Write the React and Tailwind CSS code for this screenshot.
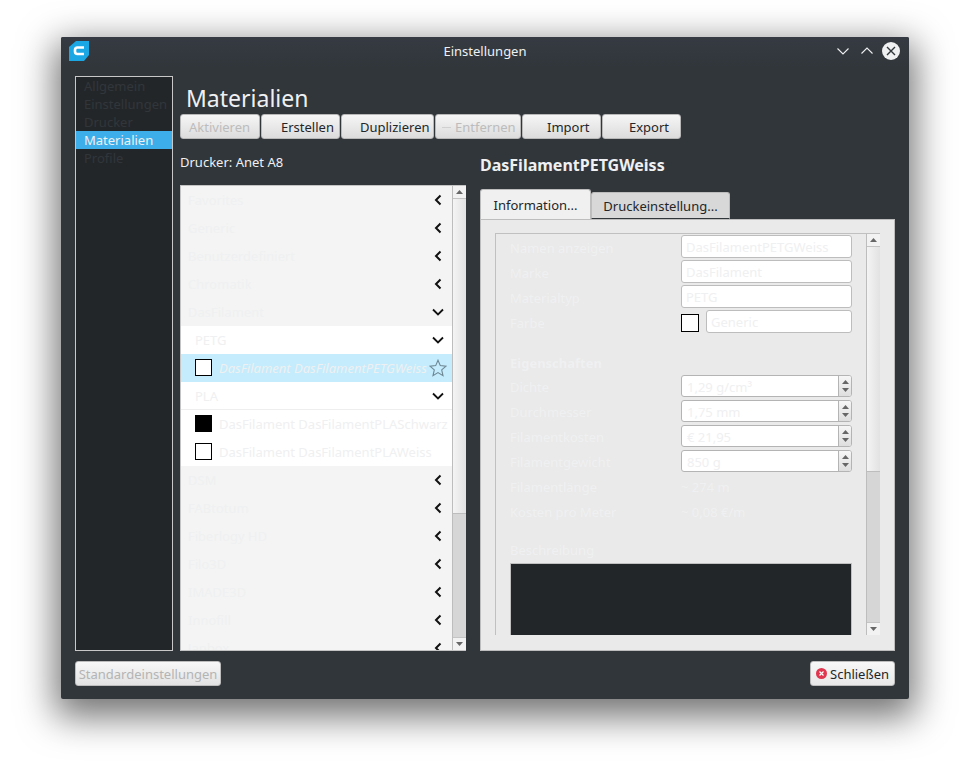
const font = { fontFamily: '"Noto Sans", sans-serif' };

const ChevronLeft = () => (
  <svg width="10" height="12" viewBox="0 0 10 12" className="shrink-0">
    <path d="M7.5 1.5 L3 6 L7.5 10.5" fill="none" stroke="#111" strokeWidth="2" />
  </svg>
);

const ChevronDown = () => (
  <svg width="12" height="10" viewBox="0 0 12 10" className="shrink-0">
    <path d="M1 2.5 L6 7.5 L11 2.5" fill="none" stroke="#111" strokeWidth="1.8" />
  </svg>
);

const Arrow = ({ up, color = "#666" }) => (
  <svg width="7" height="4" viewBox="0 0 7 4" className="block">
    <path d={up ? "M0 4 L3.5 0 L7 4 Z" : "M0 0 L3.5 4 L7 0 Z"} fill={color} />
  </svg>
);

const ToolButton = ({ label, w, pl, disabled, dash }) => (
  <div
    className={`relative flex h-[25px] items-center rounded-[3px] border border-[#b8b8b8] bg-gradient-to-b from-[#f6f6f6] to-[#dcdcdc] pt-[2px] text-[13px] ${disabled ? "text-[#bcbcbc]" : "text-[#232629]"} ${w} ${pl}`}
  >
    {dash && <span className="absolute left-[6px] top-[12px] h-px w-[9px] bg-[#d0d0d0]" />}
    {label}
  </div>
);

const Row = ({ label, open, sub }) => (
  <div className={`flex h-[28px] shrink-0 items-center justify-between pr-[8px] text-[13px] leading-[18px] text-[#eff0f1] ${sub ? "bg-white pl-[14px]" : "bg-[#f4f4f4] pl-[7px]"}`}>
    <span>{label}</span>
    <span className="flex w-[12px] justify-center">{open ? <ChevronDown /> : <ChevronLeft />}</span>
  </div>
);

const MaterialRow = ({ label, color }) => (
  <div className="flex h-[28px] shrink-0 items-center bg-white pl-[14px] text-[13px] leading-[18px] text-[#eff0f1]">
    <span className={`mb-[2px] mr-[7px] h-[17px] w-[17px] shrink-0 border border-black ${color}`} />
    <span className="whitespace-nowrap">{label}</span>
  </div>
);

const Field = ({ value, w = "w-[171px]" }) => (
  <div className={`flex h-[23px] items-center rounded-[3px] border border-[#bdbdbd] bg-white pl-[4px] pt-px text-[13px] leading-[18px] text-[#eff0f1] ${w}`}>
    {value}
  </div>
);

const Spin = ({ value }) => (
  <div className="flex h-[22px] w-[171px] items-center overflow-hidden rounded-[3px] border border-[#b4b4b4] bg-white text-[13px] leading-[18px] text-[#eff0f1]">
    <span className="mt-[2px] flex-1 pl-[5px]">{value}</span>
    <span className="flex h-full w-[13px] flex-col items-center justify-center gap-[4px] border-l border-[#b4b4b4] bg-gradient-to-b from-[#f6f6f6] to-[#dedede]">
      <Arrow up />
      <Arrow />
    </span>
  </div>
);

const FormRow = ({ label, children, cls = "h-[23px] mb-[2px]", labelCls = "mt-[2px]" }) => (
  <div className={`flex items-center text-[13px] leading-[18px] text-[#eff0f1] ${cls}`}>
    <span className={`w-[171px] ${labelCls}`}>{label}</span>
    {children}
  </div>
);

const Scrollbar = ({ thumb }) => (
  <div className="flex h-full w-[14px] shrink-0 flex-col border-l border-[#bdbdbd] bg-[#d6d6d6]">
    <div className="flex h-[13px] shrink-0 items-center justify-center border-b border-[#c4c4c4] bg-[#f2f2f2]">
      <Arrow up />
    </div>
    <div className={`shrink-0 border-b border-[#bdbdbd] bg-gradient-to-r from-[#f4f4f4] to-[#e2e2e2] ${thumb}`} />
    <div className="flex-1" />
    <div className="flex h-[13px] shrink-0 items-center justify-center border-t border-[#c4c4c4] bg-[#f2f2f2]">
      <Arrow />
    </div>
  </div>
);

const sideItems = ["Allgemein", "Einstellungen", "Drucker", "Materialien", "Profile"];
const topVendors = ["Favorites", "Generic", "Benutzerdefiniert", "Chromatik"];
const bottomVendors = ["DSM", "FABtotum", "Fiberlogy HD", "Filo3D", "IMADE3D", "Innofill", "Janbox"];

const App = () => {
  return (
    <div className="h-[761px] w-[970px] overflow-hidden bg-white pl-[61px] pt-[37px]" style={font}>
      <div className="flex h-[662px] w-[848px] flex-col rounded-[2px] bg-[#31363b] shadow-[0_12px_36px_6px_rgba(0,0,0,0.55)]">
        {/* titlebar */}
        <div className="relative flex h-[30px] shrink-0 items-center justify-center rounded-t-[2px] bg-gradient-to-b from-[#363b43] to-[#31363b] text-[13px] text-[#eff0f1]">
          <svg width="20" height="20" viewBox="0 0 20 20" className="absolute left-[8px] top-[4px]">
            <path d="M7 0 H20 V14 L15 20 H0 V6 Z" fill="#1ba6e4" />
            <path d="M15 6.5 H8.5 Q6 6.5 6 9 V10.5 Q6 13 8.5 13 H15" fill="none" stroke="#fff" strokeWidth="2.6" />
          </svg>
          <span>Einstellungen</span>
          <div className="absolute right-[9px] top-[5px] flex items-center">
            <svg width="14" height="10" viewBox="0 0 14 10" className="mr-[10px]">
              <path d="M1.5 2.5 L7 8 L12.5 2.5" fill="none" stroke="#eff0f1" strokeWidth="1.1" />
            </svg>
            <svg width="14" height="10" viewBox="0 0 14 10" className="mr-[8px]">
              <path d="M1.5 7.5 L7 2 L12.5 7.5" fill="none" stroke="#eff0f1" strokeWidth="1.1" />
            </svg>
            <svg width="18" height="18" viewBox="0 0 18 18">
              <circle cx="9" cy="9" r="9" fill="#eff0f1" />
              <path d="M5 5 L13 13 M13 5 L5 13" stroke="#31363b" strokeWidth="1.4" />
            </svg>
          </div>
        </div>

        {/* body */}
        <div className="flex h-[584px] shrink-0 gap-[7px] pl-[14px] pt-[9px]">
          <div className="h-[575px] w-[98px] shrink-0 border border-[#c8c8c8] bg-[#232629] text-[13px] text-[#31363b]">
            {sideItems.map((item) => (
              <div
                key={item}
                className={`flex h-[18px] items-center whitespace-nowrap pl-[8px] pt-[2px] ${item === "Materialien" ? "bg-[#3daee9] text-[#eff0f1]" : ""}`}
              >
                {item}
              </div>
            ))}
          </div>

          <div className="flex w-[715px] shrink-0 flex-col">
            <div className="flex h-[38px] shrink-0 items-end pl-[6px] pb-[1px] text-[23px] leading-[30px] text-[#eff0f1]">Materialien</div>
            <div className="flex h-[25px] shrink-0 gap-px">
              <ToolButton label="Aktivieren" w="w-[80px]" pl="pl-[8px]" disabled />
              <ToolButton label="Erstellen" w="w-[79px]" pl="pl-[19px]" />
              <ToolButton label="Duplizieren" w="w-[93px]" pl="pl-[18px]" />
              <ToolButton label="Entfernen" w="w-[86px]" pl="pl-[19px]" disabled dash />
              <ToolButton label="Import" w="w-[79px]" pl="pl-[24px]" />
              <ToolButton label="Export" w="w-[79px]" pl="pl-[26px]" />
            </div>

            <div className="flex h-[512px] shrink-0 gap-[14px]">
              {/* material list */}
              <div className="flex w-[286px] shrink-0 flex-col">
                <div className="flex h-[46px] shrink-0 items-start pt-[14px] text-[13px] leading-[18px] text-[#eff0f1]">Drucker: Anet A8</div>
                <div className="flex h-[466px] border border-r-0 border-[#c4c4c4] bg-[#f4f4f4]">
                  <div className="flex min-w-0 flex-1 flex-col overflow-hidden">
                    {topVendors.map((v) => (
                      <Row key={v} label={v} />
                    ))}
                    <Row label="DasFilament" open />
                    <Row label="PETG" open sub />
                    <div className="flex h-[28px] shrink-0 items-center bg-[#c4ecfc] pl-[14px] text-[13px] italic leading-[18px] text-[#eff0f1]">
                      <span className="mb-[2px] mr-[7px] h-[17px] w-[17px] shrink-0 border border-black bg-white" />
                      <span className="min-w-0 flex-1 overflow-hidden whitespace-nowrap">DasFilament DasFilamentPETGWeiss</span>
                      <svg width="18" height="18" viewBox="0 0 18 18" className="mr-[5px] shrink-0">
                        <path d="M9 1.2 L11.3 6.6 L17 7.1 L12.7 10.9 L14 16.6 L9 13.6 L4 16.6 L5.3 10.9 L1 7.1 L6.7 6.6 Z" fill="none" stroke="#6e8794" strokeWidth="1.1" />
                      </svg>
                    </div>
                    <div className="border-b border-[#eeeeee]">
                      <div className="flex h-[27px] items-center justify-between bg-white pl-[14px] pr-[8px] text-[13px] leading-[18px] text-[#eff0f1]">
                        <span>PLA</span>
                        <span className="flex w-[12px] justify-center"><ChevronDown /></span>
                      </div>
                    </div>
                    <MaterialRow label="DasFilament DasFilamentPLASchwarz" color="bg-black" />
                    <MaterialRow label="DasFilament DasFilamentPLAWeiss" color="bg-white" />
                    {bottomVendors.map((v) => (
                      <Row key={v} label={v} />
                    ))}
                  </div>
                  <Scrollbar thumb="h-[315px]" />
                </div>
              </div>

              {/* details */}
              <div className="flex w-[415px] shrink-0 flex-col">
                <div className="flex h-[51px] shrink-0 items-start pt-[15px] text-[16px] font-bold leading-[22px] text-[#eff0f1]">DasFilamentPETGWeiss</div>
                <div className="flex h-[29px] shrink-0 items-end">
                  <div className="z-10 flex h-[30px] w-[111px] items-center justify-center rounded-t-[3px] border border-b-0 border-[#bdbdbd] bg-[#f0f0f0] pt-[3px] text-[13px] text-[#232629]">Information...</div>
                  <div className="flex h-[27px] w-[139px] items-center justify-center rounded-t-[3px] border border-[#bdbdbd] border-b-[#31363b] bg-[#d8d8d8] pt-[2px] text-[13px] text-[#232629]">Druckeinstellung...</div>
                </div>
                <div className="h-[432px] border border-[#bdbdbd] bg-[#eaeaea] pl-[14px] pr-[14px] pt-[13px]">
                  <div className="flex h-[402px] overflow-hidden border-l border-t border-[#c0c0c0]">
                    <div className="w-[370px] shrink-0 overflow-hidden pl-[14px] pt-px">
                      <FormRow label="Namen anzeigen"><Field value="DasFilamentPETGWeiss" /></FormRow>
                      <FormRow label="Marke"><Field value="DasFilament" /></FormRow>
                      <FormRow label="Materialtyp"><Field value="PETG" /></FormRow>
                      <FormRow label="Farbe" cls="h-[23px]">
                        <span className="mr-[7px] mt-[2px] h-[18px] w-[18px] shrink-0 border border-black bg-white" />
                        <Field value="Generic" w="w-[146px]" />
                      </FormRow>
                      <div className="mt-[17px] flex h-[25px] items-center text-[13px] font-bold leading-[18px] text-[#eff0f1]">Eigenschaften</div>
                      <FormRow label="Dichte" cls="h-[22px] mb-[3px]" labelCls="mt-px"><Spin value="1,29 g/cm³" /></FormRow>
                      <FormRow label="Durchmesser" cls="h-[22px] mb-[3px]" labelCls="mt-px"><Spin value="1,75 mm" /></FormRow>
                      <FormRow label="Filamentkosten" cls="h-[22px] mb-[3px]" labelCls="mt-px"><Spin value="€ 21,95" /></FormRow>
                      <FormRow label="Filamentgewicht" cls="h-[22px] mb-[3px]" labelCls="mt-px"><Spin value="850 g" /></FormRow>
                      <FormRow label="Filamentlänge" cls="h-[25px] pb-[2px]" labelCls=""><span>~ 274 m</span></FormRow>
                      <FormRow label="Kosten pro Meter" cls="h-[25px] pb-[2px]" labelCls=""><span>~ 0,08 €/m</span></FormRow>
                      <div className="mt-[14px] flex h-[24px] items-center pb-[2px] text-[13px] leading-[18px] text-[#eff0f1]">Beschreibung</div>
                      <div className="h-[100px] w-[342px] border border-[#c0c0c0] bg-[#232629]" />
                    </div>
                    <Scrollbar thumb="h-[225px]" />
                  </div>
                </div>
              </div>
            </div>
          </div>
        </div>

        {/* footer */}
        <div className="mt-[10px] flex items-start justify-between pl-[14px] pr-[14px]">
          <div className="flex h-[25px] w-[146px] items-center justify-center whitespace-nowrap rounded-[3px] border border-[#bdbdbd] bg-gradient-to-b from-[#f8f8f8] to-[#e2e2e2] pt-[2px] text-[13px] text-[#b4b4b4]">Standardeinstellungen</div>
          <div className="flex h-[25px] w-[85px] items-center rounded-[3px] border border-[#bdbdbd] bg-gradient-to-b from-[#f8f8f8] to-[#e8e8e8] pl-[5px] text-[13px] text-[#232629]">
            <svg width="11" height="11" viewBox="0 0 11 11" className="mr-[3px] shrink-0">
              <circle cx="5.5" cy="5.5" r="5.5" fill="#e0364f" />
              <path d="M3.5 3.5 L7.5 7.5 M7.5 3.5 L3.5 7.5" stroke="#fff" strokeWidth="1.2" />
            </svg>
            <span className="mt-[2px]">Schließen</span>
          </div>
        </div>
      </div>
    </div>
  );
};

export default App;
